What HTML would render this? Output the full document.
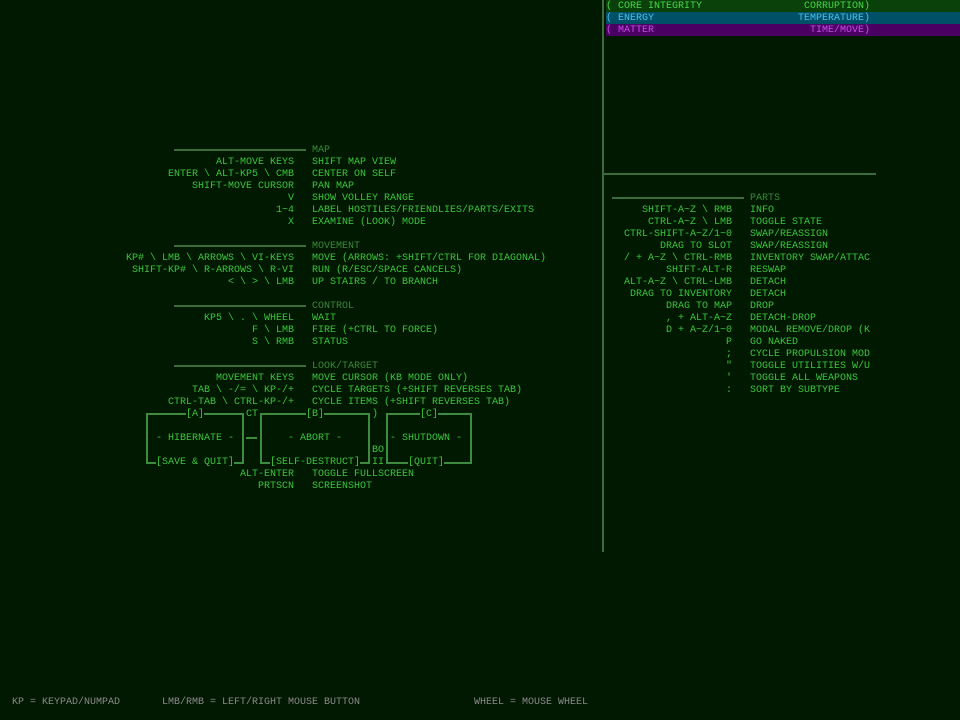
<!DOCTYPE html>
<html><head><meta charset="utf-8"><style>
body{margin:0;width:960px;height:720px;background:#011801;overflow:hidden;position:relative;font-family:"Liberation Mono",monospace;font-size:10px;text-transform:uppercase;color:#3cc63c}
.t{position:absolute;height:12px;line-height:13px;white-space:pre}
.k{position:absolute;height:12px;line-height:13px;white-space:pre;text-align:right}
.h{color:#3a8a3a}
.ln{position:absolute;height:2px;background:#3d6b3d}
.bx{position:absolute;border:2px solid #3e8a3e}
.m{background:#011801;position:absolute;height:12px;line-height:13px;white-space:pre}
</style></head><body>
<div class="t" style="left:606px;top:0;width:354px;background:#0a400a;color:#46d846">( Core Integrity</div>
<div class="t" style="left:606px;top:0;width:264px;text-align:right;color:#46d846">Corruption)</div>
<div class="t" style="left:606px;top:12px;width:354px;background:#005068;color:#46c0f0">( Energy</div>
<div class="t" style="left:606px;top:12px;width:264px;text-align:right;color:#46c0f0">Temperature)</div>
<div class="t" style="left:606px;top:24px;width:354px;background:#4a0062;color:#d046f0">( Matter</div>
<div class="t" style="left:606px;top:24px;width:264px;text-align:right;color:#d046f0">Time/Move)</div>
<div class="ln" style="left:602px;top:0;width:2px;height:552px"></div>
<div class="ln" style="left:602px;top:173px;width:274px"></div>

<div class="ln" style="left:174px;top:149px;width:132px"></div>
<div class="t h" style="left:312px;top:144px">Map</div>
<div class="k" style="left:0;width:294px;top:156px">Alt-Move Keys</div><div class="t" style="left:312px;top:156px">Shift Map View</div>
<div class="k" style="left:0;width:294px;top:168px">Enter \ Alt-KP5 \ CMB</div><div class="t" style="left:312px;top:168px">Center on Self</div>
<div class="k" style="left:0;width:294px;top:180px">Shift-Move Cursor</div><div class="t" style="left:312px;top:180px">Pan Map</div>
<div class="k" style="left:0;width:294px;top:192px">v</div><div class="t" style="left:312px;top:192px">Show Volley Range</div>
<div class="k" style="left:0;width:294px;top:204px">1~4</div><div class="t" style="left:312px;top:204px">Label Hostiles/Friendlies/Parts/Exits</div>
<div class="k" style="left:0;width:294px;top:216px">x</div><div class="t" style="left:312px;top:216px">Examine (Look) Mode</div>

<div class="ln" style="left:174px;top:245px;width:132px"></div>
<div class="t h" style="left:312px;top:240px">Movement</div>
<div class="k" style="left:0;width:294px;top:252px">KP# \ LMB \ Arrows \ vi-keys</div><div class="t" style="left:312px;top:252px">Move (Arrows: +Shift/Ctrl for Diagonal)</div>
<div class="k" style="left:0;width:294px;top:264px">Shift-KP# \ r-Arrows \ r-vi</div><div class="t" style="left:312px;top:264px">Run (r/Esc/Space Cancels)</div>
<div class="k" style="left:0;width:294px;top:276px">&lt; \ &gt; \ LMB</div><div class="t" style="left:312px;top:276px">Up Stairs / To Branch</div>

<div class="ln" style="left:174px;top:305px;width:132px"></div>
<div class="t h" style="left:312px;top:300px">Control</div>
<div class="k" style="left:0;width:294px;top:312px">KP5 \ . \ Wheel</div><div class="t" style="left:312px;top:312px">Wait</div>
<div class="k" style="left:0;width:294px;top:324px">f \ LMB</div><div class="t" style="left:312px;top:324px">Fire (+Ctrl to Force)</div>
<div class="k" style="left:0;width:294px;top:336px">s \ RMB</div><div class="t" style="left:312px;top:336px">Status</div>

<div class="ln" style="left:174px;top:365px;width:132px"></div>
<div class="t h" style="left:312px;top:360px">Look/Target</div>
<div class="k" style="left:0;width:294px;top:372px">Movement Keys</div><div class="t" style="left:312px;top:372px">Move Cursor (KB Mode Only)</div>
<div class="k" style="left:0;width:294px;top:384px">Tab \ -/= \ KP-/+</div><div class="t" style="left:312px;top:384px">Cycle Targets (+Shift Reverses Tab)</div>
<div class="k" style="left:0;width:294px;top:396px">Ctrl-Tab \ Ctrl-KP-/+</div><div class="t" style="left:312px;top:396px">Cycle Items (+Shift Reverses Tab)</div>

<div class="bx" style="left:146px;top:413px;width:94px;height:47px"></div>
<div class="m" style="left:186px;top:408px">[A]</div>
<div class="m" style="left:156px;top:432px">- HIBERNATE -</div>
<div class="m" style="left:156px;top:456px">[Save &amp; Quit]</div>
<div class="t" style="left:246px;top:408px">Ct</div>
<div class="ln" style="left:246px;top:437px;width:11px;background:#3e8a3e"></div>
<div class="bx" style="left:260px;top:413px;width:106px;height:47px"></div>
<div class="m" style="left:306px;top:408px">[B]</div>
<div class="m" style="left:288px;top:432px">- ABORT -</div>
<div class="m" style="left:270px;top:456px">[Self-destruct]</div>
<div class="t" style="left:372px;top:408px">)</div>
<div class="t" style="left:372px;top:444px">BO</div>
<div class="t" style="left:372px;top:456px">II</div>
<div class="bx" style="left:386px;top:413px;width:82px;height:47px"></div>
<div class="m" style="left:420px;top:408px">[C]</div>
<div class="m" style="left:390px;top:432px">- SHUTDOWN -</div>
<div class="m" style="left:408px;top:456px">[Quit]</div>

<div class="k" style="left:0;width:294px;top:468px">Alt-Enter</div><div class="t" style="left:312px;top:468px">Toggle Fullscreen</div>
<div class="k" style="left:0;width:294px;top:480px">PrtScn</div><div class="t" style="left:312px;top:480px">Screenshot</div>

<div class="ln" style="left:612px;top:197px;width:132px"></div>
<div class="t h" style="left:750px;top:192px">Parts</div>
<div class="k" style="left:0;width:732px;top:204px">Shift-a~z \ RMB</div><div class="t" style="left:750px;top:204px">Info</div>
<div class="k" style="left:0;width:732px;top:216px">Ctrl-a~z \ LMB</div><div class="t" style="left:750px;top:216px">Toggle State</div>
<div class="k" style="left:0;width:732px;top:228px">Ctrl-Shift-a~z/1~0</div><div class="t" style="left:750px;top:228px">Swap/Reassign</div>
<div class="k" style="left:0;width:732px;top:240px">Drag to Slot</div><div class="t" style="left:750px;top:240px">Swap/Reassign</div>
<div class="k" style="left:0;width:732px;top:252px">/ + a~z \ Ctrl-RMB</div><div class="t" style="left:750px;top:252px">Inventory Swap/Attac</div>
<div class="k" style="left:0;width:732px;top:264px">Shift-Alt-r</div><div class="t" style="left:750px;top:264px">Reswap</div>
<div class="k" style="left:0;width:732px;top:276px">Alt-a~z \ Ctrl-LMB</div><div class="t" style="left:750px;top:276px">Detach</div>
<div class="k" style="left:0;width:732px;top:288px">Drag to Inventory</div><div class="t" style="left:750px;top:288px">Detach</div>
<div class="k" style="left:0;width:732px;top:300px">Drag to Map</div><div class="t" style="left:750px;top:300px">Drop</div>
<div class="k" style="left:0;width:732px;top:312px">, + Alt-a~z</div><div class="t" style="left:750px;top:312px">Detach-Drop</div>
<div class="k" style="left:0;width:732px;top:324px">d + a~z/1~0</div><div class="t" style="left:750px;top:324px">Modal Remove/Drop (K</div>
<div class="k" style="left:0;width:732px;top:336px">p</div><div class="t" style="left:750px;top:336px">Go Naked</div>
<div class="k" style="left:0;width:732px;top:348px">;</div><div class="t" style="left:750px;top:348px">Cycle Propulsion Mod</div>
<div class="k" style="left:0;width:732px;top:360px">"</div><div class="t" style="left:750px;top:360px">Toggle Utilities w/U</div>
<div class="k" style="left:0;width:732px;top:372px">'</div><div class="t" style="left:750px;top:372px">Toggle All Weapons</div>
<div class="k" style="left:0;width:732px;top:384px">:</div><div class="t" style="left:750px;top:384px">Sort by Subtype</div>

<div class="t" style="left:12px;top:696px;color:#8a8a8a">KP = Keypad/Numpad</div>
<div class="t" style="left:162px;top:696px;color:#8a8a8a">LMB/RMB = Left/Right Mouse Button</div>
<div class="t" style="left:474px;top:696px;color:#8a8a8a">Wheel = Mouse Wheel</div>
</body></html>
